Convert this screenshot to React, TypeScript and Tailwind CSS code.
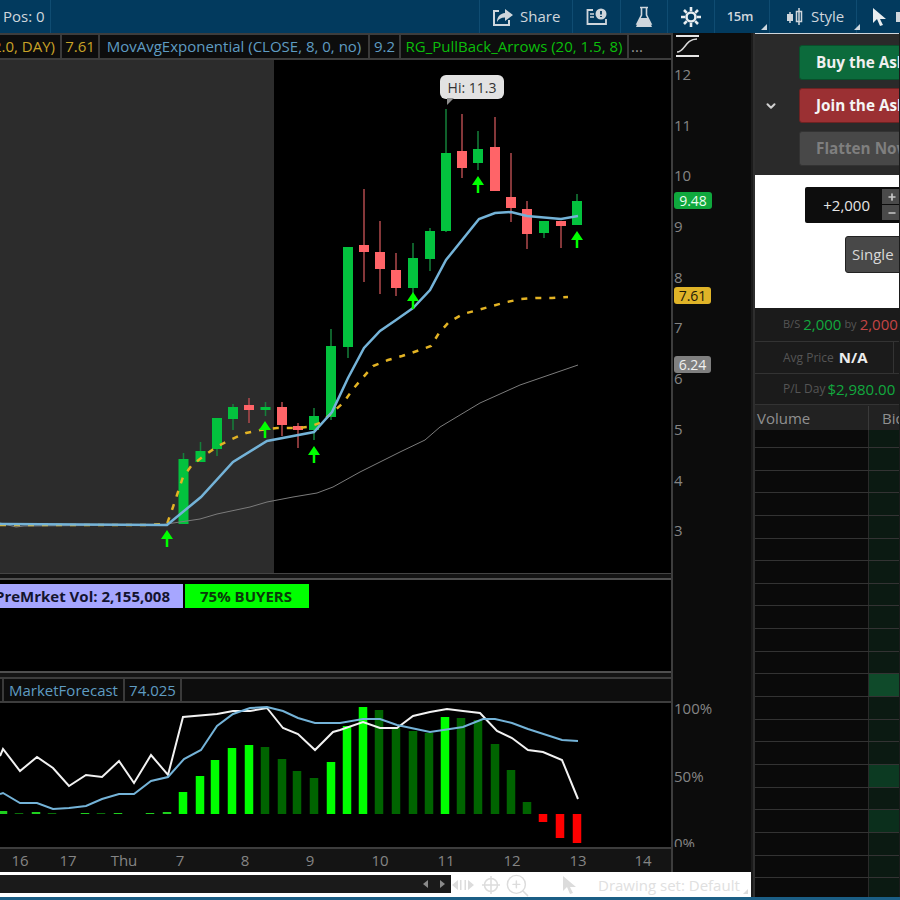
import { ChevronDown, Plus, Minus, ZoomIn } from "lucide-react";

type Candle = [number, number, number, number, number, "g" | "r"];

// x, wick top, wick bottom, body top, body bottom, colour
const candles: Candle[] = [
  [183.5, 453, 524, 459, 524, "g"],
  [200.5, 442, 462, 451, 462, "g"],
  [217, 418, 456, 418, 449, "g"],
  [233, 404, 430, 407, 419, "g"],
  [249, 398, 423, 405, 410, "r"],
  [265.5, 402, 416, 407, 410, "g"],
  [282, 402, 436, 407, 425, "r"],
  [298, 423, 448, 426, 430, "r"],
  [314, 408, 440, 416, 430, "g"],
  [331, 329, 420, 346, 417, "g"],
  [348, 247, 358, 247, 347, "g"],
  [364, 189, 282, 245, 252, "r"],
  [380, 221, 294, 252, 269, "r"],
  [396, 253, 296, 270, 288, "r"],
  [413, 243, 308, 258, 288, "g"],
  [430, 228, 271, 231, 259, "g"],
  [446, 109, 232, 153, 231, "g"],
  [462, 114, 178, 151, 168, "r"],
  [478, 131, 170, 149, 163, "g"],
  [495, 117, 191, 147, 191, "r"],
  [511, 153, 222, 197, 208, "r"],
  [527, 201, 249, 209, 234, "r"],
  [544, 221, 238, 221, 233, "g"],
  [561, 221, 248, 221, 226, "r"],
  [577, 194, 225, 201, 225, "g"],
];

const arrows = [
  [167, 530],
  [265, 421],
  [314, 446],
  [413, 292],
  [478, 176],
  [577, 231],
];

const emaBlue =
  "0,524 167,525 201,497 233,462 267,441 314,432 332,412 348,378 364,348 380,331 396,320 413,308 430,290 446,260 479,219 495,213 511,212 527,216 561,219 578,216";
const emaYellow =
  "0,525 145,525 167,524 173,507 178,492 183,477 192,465 205,455 218,446 232,439 246,433 260,430 277,428 297,428 308,427 320,423 332,413 344,402 353,389 373,366 388,360 402,356 417,351 431,346 439,333 449,322 463,314 478,310 492,306 507,302 521,299 537,298 552,298 568,297";
const smaGray =
  "0,523 16,527 24,526 160,525 200,519 217,514 250,507 267,502 293,497 317,493 333,487 360,472 400,452 425,440 440,427 480,403 520,385 578,365";

const forecastWhite =
  "0,756 3,749 20,771 37,757 53,768 69,786 86,775 102,777 119,761 134,783 151,755 168,775 183,717 217,714 233,711 250,711 267,708 283,728 298,734 315,750 333,732 340,730 363,722 380,728 397,728 413,716 430,712 447,709 463,711 480,713 497,731 512,738 528,750 543,752 562,760 578,799";
const forecastBlue =
  "0,794 3,793 20,803 37,803 53,809 69,808 86,806 102,799 119,794 134,794 151,781 168,777 184,759 201,750 217,726 233,714 250,708 267,707 283,711 298,718 315,723 333,723 340,723 363,719 380,719 397,725 430,732 463,727 483,719 495,719 512,723 528,729 562,740 578,741";

// x, top, bottom, colour
const bars: [number, number, number, string][] = [
  [3, 811, 814, "#1fd01f"],
  [19, 813, 814, "#0a700a"],
  [36, 812, 814, "#1fd01f"],
  [52, 813, 814, "#0a700a"],
  [85, 813, 814, "#1fd01f"],
  [101, 813, 814, "#0a700a"],
  [118, 813, 814, "#1fd01f"],
  [150, 813, 814, "#1fd01f"],
  [167, 812, 814, "#1fd01f"],
  [183, 792, 814, "#00ff00"],
  [200, 776, 814, "#00ff00"],
  [215, 760, 814, "#00ff00"],
  [232, 748, 814, "#00ff00"],
  [249, 745, 814, "#00ff00"],
  [265, 747, 814, "#006400"],
  [282, 759, 814, "#006400"],
  [297, 771, 814, "#006400"],
  [314, 778, 814, "#006400"],
  [331, 762, 814, "#00ff00"],
  [347, 726, 814, "#00ff00"],
  [363, 707, 814, "#00ff00"],
  [379, 710, 814, "#006400"],
  [396, 728, 814, "#006400"],
  [413, 731, 814, "#006400"],
  [429, 733, 814, "#006400"],
  [445, 717, 814, "#00ff00"],
  [461, 718, 814, "#006400"],
  [478, 720, 814, "#006400"],
  [495, 744, 814, "#006400"],
  [511, 770, 814, "#006400"],
  [527, 802, 814, "#006400"],
  [543, 814, 822, "#ff0000"],
  [560, 814, 838, "#ff0000"],
  [577, 814, 843, "#ff0000"],
];

const ticks = ["12", "11", "10", "9", "8", "7", "6", "5", "4", "3"];

const timeLabels = [
  { label: "16", w: "w-10" },
  { label: "17", w: "w-14" },
  { label: "Thu", w: "w-14" },
  { label: "7", w: "w-14" },
  { label: "8", w: "w-[74px]" },
  { label: "9", w: "w-14" },
  { label: "10", w: "w-[84px]" },
  { label: "11", w: "w-12" },
  { label: "12", w: "w-[84px]" },
  { label: "13", w: "w-12" },
  { label: "14", w: "w-[82px]" },
];

const ladderRows = Array.from({ length: 20 }, (_, i) => i);

function Corner() {
  return <span className="mt-auto mb-[3px] ml-[3px] h-0 w-0 border-b-[6px] border-l-[6px] border-b-[#cfd8df] border-l-transparent" />;
}

function TopBar() {
  return (
    <div className="flex h-[33px] shrink-0 items-stretch justify-between bg-[#023a5e] text-[15px] text-[#cfd6dc]">
      <div className="flex w-[51px] items-center border-r border-[#0f4c72] pl-[3px]">Pos: 0</div>
      <div className="flex items-stretch">
        <div className="flex w-[94px] items-center gap-[6px] border-x border-[#0f4c72] pl-[12px]">
          <svg width="22" height="18" viewBox="0 0 22 18" fill="none">
            <path d="M7 3H2v14h15v-5" stroke="#cfd6dc" strokeWidth="2" />
            <path d="M13 1l8 6-8 6V9.500C9 9.500 6.500 11 5 14c0-5 3-8.500 8-9z" fill="#cfd6dc" />
          </svg>
          Share
        </div>
        <div className="flex w-[48px] items-center justify-center border-r border-[#0f4c72]">
          <svg width="22" height="18" viewBox="0 0 22 18" fill="none">
            <path d="M7 2H1.500v14H20v-5" stroke="#cfd6dc" strokeWidth="1.800" />
            <path d="M4 6h4M4 9h4" stroke="#cfd6dc" strokeWidth="1.500" />
            <circle cx="15" cy="6" r="5.500" fill="#cfd6dc" />
            <path d="M15 3v3.500M15 8v1" stroke="#023a5e" strokeWidth="1.800" />
          </svg>
        </div>
        <div className="flex w-[47px] items-center justify-center border-r border-[#0f4c72]">
          <svg width="18" height="22" viewBox="0 0 18 22" fill="none">
            <path d="M5 1.500h8" stroke="#cfd6dc" strokeWidth="1.500" />
            <path d="M6.500 2v7L2 18h14l-4.500-9V2" stroke="#cfd6dc" strokeWidth="1.600" />
            <path d="M5 12h8l4 9H1z" fill="#cfd6dc" />
          </svg>
        </div>
        <div className="flex w-[47px] items-center justify-center border-r border-[#0f4c72]">
          <svg width="20" height="20" viewBox="0 0 20 20" fill="none">
            <circle cx="10" cy="10" r="4.500" stroke="#e8edf0" strokeWidth="2.600" />
            <path
              d="M10 0v4M10 16v4M0 10h4M16 10h4M3 3l2.800 2.800M14.200 14.200L17 17M17 3l-2.800 2.800M5.800 14.200L3 17"
              stroke="#e8edf0"
              strokeWidth="2.600"
            />
          </svg>
        </div>
        <div className="flex w-[55px] items-center justify-end border-r border-[#0f4c72] pr-[2px] text-[13px] font-semibold tracking-[-0.3px]">
          <span className="mr-[5px]">15m</span>
          <Corner />
        </div>
        <div className="flex w-[87px] items-center gap-[7px] border-r border-[#0f4c72] pl-[16px]">
          <svg width="18" height="20" viewBox="0 0 18 20" fill="none" className="shrink-0">
            <path d="M4 5v11M13 1v17" stroke="#cfd6dc" strokeWidth="1.500" />
            <rect x="1" y="7" width="6" height="7" fill="#cfd6dc" />
            <rect x="10.500" y="4.500" width="5" height="10" stroke="#cfd6dc" strokeWidth="1.500" />
          </svg>
          Style
          <Corner />
        </div>
        <div className="flex w-[43px] items-center pl-[15px]">
          <svg width="16" height="20" viewBox="0 0 16 20">
            <path d="M1 1v15l4-4 3 7 3-1-3-6h6z" fill="#e8edf0" />
          </svg>
          <span className="ml-2 h-[10px] w-[4px] shrink-0 bg-[#cfd6dc]" />
        </div>
      </div>
    </div>
  );
}

function LegendCell({ className, children }: { className: string; children: React.ReactNode }) {
  return (
    <div className={`flex shrink-0 items-center whitespace-nowrap border-r-2 border-[#3a3a3a] bg-[#0d0d0d] ${className}`}>
      {children}
    </div>
  );
}

function PriceLegend() {
  return (
    <div className="flex h-[27px] shrink-0 overflow-hidden border-y-2 border-[#3d3d3d] text-[15px] leading-none">
      <LegendCell className="w-[62px] justify-end overflow-hidden pr-[5px] text-[#c9a227]">(2.0, DAY)</LegendCell>
      <LegendCell className="w-[38px] justify-center text-[#c9a227]">7.61</LegendCell>
      <LegendCell className="w-[270px] justify-center text-[#5f9cc2]">MovAvgExponential (CLOSE, 8, 0, no)</LegendCell>
      <LegendCell className="w-[31px] justify-center text-[#5f9cc2]">9.2</LegendCell>
      <LegendCell className="w-[228px] justify-center text-[#0bbd0b]">RG_PullBack_Arrows (20, 1.5, 8)</LegendCell>
      <div className="flex flex-1 items-center bg-[#0d0d0d] pl-[2px] text-[#999]">...</div>
    </div>
  );
}

function PriceChart() {
  return (
    <div className="relative h-[513px] bg-black">
      <svg width="671" height="513" viewBox="0 60 671 513" className="block">
        <rect x="0" y="60" width="274" height="513" fill="#2c2c2c" />
        {candles.map(([x, wt, wb, bt, bb, c]) => (
          <g key={x}>
            <line x1={x} x2={x} y1={wt} y2={wb} stroke={c === "g" ? "#14803a" : "#b04a4c"} strokeWidth="1.500" />
            <rect x={x - 5} y={bt} width="10" height={bb - bt} fill={c === "g" ? "#03c23e" : "#ff6468"} />
          </g>
        ))}
        <polyline points={smaGray} fill="none" stroke="#7c7c7c" strokeWidth="1" />
        <polyline points={emaYellow} fill="none" stroke="#e3b324" strokeWidth="2.500" strokeDasharray="6 8" />
        <polyline points={emaBlue} fill="none" stroke="#74b3d8" strokeWidth="2.500" />
        {arrows.map(([x, y]) => (
          <g key={x}>
            <path d={`M${x} ${y}l6 9h-12z`} fill="#00ff00" />
            <rect x={x - 1.25} y={y + 8} width="2.500" height="9" fill="#00ff00" />
          </g>
        ))}
      </svg>
      <div className="absolute left-[440px] top-[15px] flex h-[24px] w-[64px] items-center justify-center rounded-[6px] bg-[#e2e2e2] text-[14px] text-[#333]">
        Hi: 11.3
        <span className="absolute left-[7px] top-[23px] h-0 w-0 border-r-[7px] border-t-[7px] border-r-transparent border-t-[#8f8f8f]" />
      </div>
    </div>
  );
}

function PriceAxis() {
  return (
    <div className="relative flex h-[540px] shrink-0 flex-col">
      <svg width="24" height="25" viewBox="0 0 24 25" fill="none" className="ml-[3px] shrink-0">
        <path d="M0 3h23M0 23h23" stroke="#e6e6e6" strokeWidth="2.200" />
        <path d="M1 19c8 0 8-13 20-13" stroke="#d8d8d8" strokeWidth="1.500" />
      </svg>
      <div className="flex flex-col gap-[30.7px] pl-[1px] pt-[6px]">
        {ticks.map((t) => (
          <span key={t}>{t}</span>
        ))}
      </div>
      <span className="absolute left-[1px] top-[159px] flex h-[17px] w-[38px] items-center justify-center rounded-[3px] bg-[#0fa83d] text-[14px] text-[#eafff0]">9.48</span>
      <span className="absolute left-[1px] top-[254px] flex h-[17px] w-[37px] items-center justify-center rounded-[3px] bg-[#e0b428] text-[14px] text-[#1e1a08]">7.61</span>
      <span className="absolute left-[1px] top-[323px] flex h-[17px] w-[37px] items-center justify-center rounded-[3px] bg-[#7f7f7f] text-[14px] text-[#f0f0f0]">6.24</span>
    </div>
  );
}

function ForecastChart() {
  return (
    <svg width="671" height="144" viewBox="0 703 671 144" className="block bg-black">
      {bars.map(([x, top, bottom, color]) => (
        <rect key={x} x={x - 4.25} y={top} width="8.500" height={bottom - top} fill={color} />
      ))}
      <polyline points={forecastWhite} fill="none" stroke="#f2f2f2" strokeWidth="2" />
      <polyline points={forecastBlue} fill="none" stroke="#74b3d8" strokeWidth="2" />
    </svg>
  );
}

function BottomBar() {
  return (
    <div className="flex h-[26px] shrink-0 bg-white">
      <div className="mb-[5px] mt-[3px] flex w-[451px] items-center justify-end gap-[12px] bg-[#1a1a1a] pr-[6px] text-[#8a8a8a]">
        <span className="h-0 w-0 border-y-[4px] border-r-[5px] border-y-transparent border-r-[#8a8a8a]" />
        <span className="h-0 w-0 border-y-[4px] border-l-[5px] border-y-transparent border-l-[#8a8a8a]" />
      </div>
      <div className="flex flex-1 items-center text-[#dcdcdc]">
        <svg width="22" height="12" viewBox="0 0 22 12" className="ml-[1px] shrink-0" fill="#dcdcdc">
          <path d="M0 6l6-5v10zM22 6l-6-5v10z" />
          <path d="M8 1h1.500v10H8zM12.500 1H14v10h-1.500z" />
        </svg>
        <svg width="18" height="18" viewBox="0 0 18 18" fill="none" className="ml-[8px] shrink-0">
          <circle cx="9" cy="9" r="6.500" stroke="#dcdcdc" strokeWidth="1.500" />
          <path d="M9 0v18M0 9h18" stroke="#dcdcdc" strokeWidth="1.500" />
        </svg>
        <ZoomIn size={27} strokeWidth={1.3} className="ml-[4px] shrink-0" />
        <svg width="18" height="20" viewBox="0 0 16 20" className="ml-[30px] shrink-0">
          <path d="M1 1v15l4-4 3 7 3-1-3-6h6z" fill="#dcdcdc" />
        </svg>
        <span className="ml-[19px] whitespace-nowrap text-[15px] text-[#e0e0e0]">Drawing set: Default</span>
        <span className="mb-[-12px] ml-[3px] h-0 w-0 border-b-[5px] border-l-[5px] border-b-[#dcdcdc] border-l-transparent" />
      </div>
    </div>
  );
}

function ActionButton({ label, className }: { label: string; className: string }) {
  return (
    <button className={`flex h-[35px] w-[150px] shrink-0 items-center rounded-[3px] border pl-[16px] text-[15.300px] font-bold ${className}`}>
      {label}
    </button>
  );
}

function LadderRow({ className, bid }: { className: string; bid: string }) {
  return (
    <div className={`flex shrink-0 border-b border-[#333] ${className}`}>
      <div className="w-[114px] shrink-0 border-r border-[#2a2a2a] bg-[#0a0a0a]" />
      <div className={`flex-1 ${bid}`} />
    </div>
  );
}

function OrderPanel() {
  return (
    <div className="flex w-[145px] shrink-0 flex-col overflow-hidden border-l border-[#2e2e2e] bg-[#1b1b1b]">
      <div className="h-[1px] shrink-0 bg-[#cfd6dc]" />
      <div className="flex h-[141px] shrink-0 items-center bg-[#2a2a2a] pt-[2px]">
        <ChevronDown size={14} strokeWidth={3.500} className="ml-[9px] shrink-0 text-[#d0d0d0]" />
        <div className="ml-[21px] flex flex-col gap-[8px]">
          <ActionButton label="Buy the Ask" className="border-[#0a4f2b] bg-[#0c6b3c] text-[#f0f0f0]" />
          <ActionButton label="Join the Ask" className="border-[#6e2222] bg-[#9b3033] text-[#f5f5f5]" />
          <ActionButton label="Flatten Now" className="border-[#333] bg-[#484848] text-[#7f7f7f]" />
        </div>
      </div>
      <div className="flex h-[133px] shrink-0 flex-col bg-white">
        <div className="ml-[50px] mt-[12px] flex h-[36px] w-[110px] shrink-0 rounded-[2px] bg-[#0d0d0d]">
          <span className="flex w-[77px] items-center justify-end pr-[12px] text-[15px] text-[#e6e6e6]">+2,000</span>
          <div className="flex flex-col gap-[1px] py-[2px]">
            <span className="flex h-[15px] w-[30px] items-center bg-[#4a4a4a] pl-[5px] text-[#c8c8c8]">
              <Plus size={10} strokeWidth={4} />
            </span>
            <span className="flex h-[15px] w-[30px] items-center bg-[#4a4a4a] pl-[5px] text-[#c8c8c8]">
              <Minus size={10} strokeWidth={4} />
            </span>
          </div>
        </div>
        <div className="ml-[90px] mt-[13px] flex h-[37px] w-[70px] shrink-0 items-center rounded-[3px] border border-[#222] bg-[#484848] pl-[6px] text-[15px] text-[#d8d8d8]">
          Single
        </div>
      </div>
      <div className="flex h-[34px] shrink-0 items-center gap-[3px] border-b border-[#333] bg-[#1b1b1b] pl-[28px] text-[15px]">
        <span className="text-[11px] text-[#555]">B/S</span>
        <span className="text-[#12a83e]">2,000</span>
        <span className="text-[11px] text-[#555]">by</span>
        <span className="text-[#c44545]">2,000</span>
      </div>
      <div className="flex h-[32px] shrink-0 border-b border-[#333] bg-[#1b1b1b]">
        <div className="flex w-[139px] shrink-0 items-center gap-[5px] border-r border-[#333] pl-[28px]">
          <span className="text-[12px] text-[#555]">Avg Price</span>
          <span className="text-[15px] font-bold text-[#ededed]">N/A</span>
        </div>
      </div>
      <div className="flex h-[31px] shrink-0 items-center gap-[2px] border-b border-[#333] bg-[#1b1b1b] pl-[28px]">
        <span className="text-[12px] text-[#555]">P/L Day</span>
        <span className="text-[15px] text-[#12a83e]">$2,980.00</span>
      </div>
      <div className="flex h-[25px] shrink-0 bg-[#222] pt-[1px] text-[15px] text-[#909090]">
        <div className="flex w-[114px] shrink-0 items-center border-r border-[#3a3a3a] pl-[2px]">Volume</div>
        <div className="flex flex-1 items-center pl-[13px]">Bid</div>
      </div>
      <LadderRow className="h-[18px]" bid="bg-[#0b1a12]" />
      {ladderRows.map((i) => (
        <LadderRow
          key={i}
          className="h-[22.650px]"
          bid={i === 10 ? "bg-[#0f4a2a]" : i === 14 ? "bg-[#0c3a22]" : i === 16 ? "bg-[#0b2f1c]" : "bg-[#0b1a12]"}
        />
      ))}
    </div>
  );
}

export default function App() {
  return (
    <div className="flex h-[900px] w-[900px] flex-col overflow-hidden bg-[#1b1b1b] font-['Open_Sans',sans-serif]">
      <TopBar />
      <div className="flex min-h-0 flex-1">
        <div className="flex w-[754px] shrink-0 flex-col overflow-hidden border-r border-[#2e2e2e] pr-[2px]">
          <div className="flex h-[839px] shrink-0">
            <div className="flex w-[673px] shrink-0 flex-col border-r-2 border-[#3d3d3d]">
              <PriceLegend />
              <PriceChart />
              <div className="flex h-[104px] shrink-0 flex-col border-t border-[#444] bg-[#141414] pb-[4px] pt-[4px]">
                <div className="flex h-full flex-col border-y-2 border-[#4f4f4f] bg-black pt-[4px]">
                  <div className="flex text-[15px] font-bold leading-none text-[#14142e]">
                    <span className="flex h-[24px] w-[183px] items-center justify-end overflow-hidden whitespace-nowrap bg-[#a6a6ff] pr-[13px]">PreMrket Vol: 2,155,008</span>
                    <span className="ml-[2px] flex h-[24px] w-[124px] items-center justify-center bg-[#00ff00] pr-[2px] text-[#0a3a0a]">75% BUYERS</span>
                  </div>
                </div>
              </div>
              <div className="flex h-[26px] shrink-0 border-y-2 border-[#3d3d3d] bg-[#0d0d0d] text-[15px] leading-none text-[#5f9cc2]">
                <span className="w-[4px] border-r-2 border-[#3a3a3a]" />
                <span className="flex w-[121px] items-center justify-center border-r-2 border-[#3a3a3a]">MarketForecast</span>
                <span className="flex w-[57px] items-center justify-center border-r-2 border-[#3a3a3a]">74.025</span>
              </div>
              <ForecastChart />
              <div className="flex min-h-0 flex-1 items-center border-t-2 border-[#3d3d3d] bg-[#141414] text-[15px] text-[#858585]">
                {timeLabels.map((t) => (
                  <span key={t.label} className={`shrink-0 text-center ${t.w}`}>
                    {t.label}
                  </span>
                ))}
              </div>
            </div>
            <div className="flex flex-1 flex-col bg-[#0c0c0c] text-[15px] leading-5 text-[#858585]">
              <PriceAxis />
              <div className="h-[104px] shrink-0" />
              <div className="flex h-[170px] shrink-0 flex-col overflow-hidden pl-[1px]">
                <span className="mt-[21px] shrink-0">100%</span>
                <span className="mt-[48px] shrink-0">50%</span>
                <span className="mt-[47px] shrink-0">0%</span>
              </div>
            </div>
          </div>
          <BottomBar />
        </div>
        <OrderPanel />
      </div>
      <div className="h-[3px] shrink-0 bg-[#1b5e85]" />
    </div>
  );
}
